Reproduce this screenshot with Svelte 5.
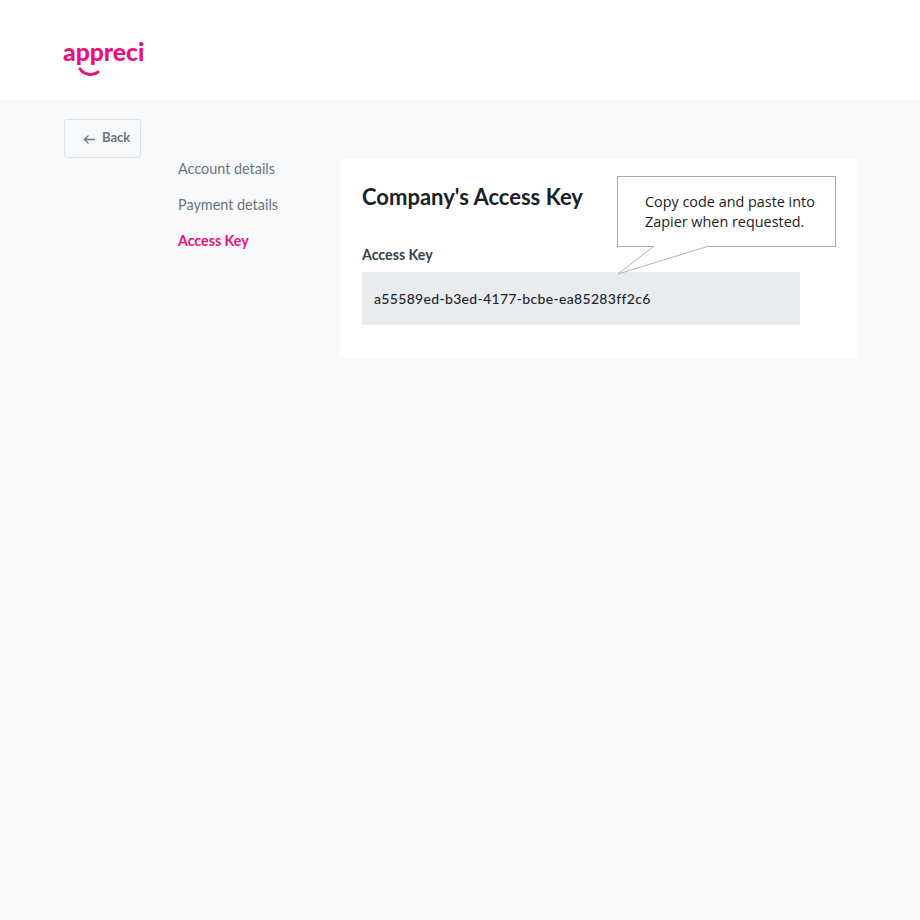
<script>
  const links = [
    { label: 'Account details' },
    { label: 'Payment details' },
    { label: 'Access Key', active: true }
  ];
  const accessKey = 'a55589ed-b3ed-4177-bcbe-ea85283ff2c6';
</script>

<div class="page">
  <header>
    <div class="logo">
      <span>appreci</span>
      <svg class="smile" width="22" height="10" viewBox="0 0 22 10">
        <path d="M2 2 C6 8 15 9 20 5" fill="none" stroke="#e9107f" stroke-width="3" stroke-linecap="round" />
      </svg>
    </div>
  </header>

  <main>
    <button class="back">
      <svg width="13" height="11" viewBox="0 0 13 11">
        <path d="M12 5.5H1.5M5.5 1.5 1.5 5.5l4 4" fill="none" stroke="#66757f" stroke-width="1.3" />
      </svg>
      <span>Back</span>
    </button>

    <div class="columns">
      <nav>
        {#each links as link}
          <div class="link" class:active={link.active}>{link.label}</div>
        {/each}
      </nav>

      <section class="card">
        <h1>Company's Access Key</h1>
        <div class="label">Access Key</div>
        <div class="key">{accessKey}</div>

        <div class="callout">
          <p>Copy code and paste into<br />Zapier when requested.</p>
          <svg class="tail" width="94" height="30" viewBox="0 0 94 30">
            <path d="M37 0 1 28 92 0" fill="#fff" stroke="#b4b4b4" stroke-width="1" />
          </svg>
        </div>
      </section>
    </div>
  </main>
</div>

<style>
  :global(body) {
    background: #f8f9fb;
  }
  .page {
    min-height: 920px;
    background: #f8f9fb;
    font-family: Lato, "Noto Sans", sans-serif;
  }
  header {
    height: 100px;
    box-sizing: border-box;
    background: #fff;
    padding: 36px 0 0 63px;
  }
  .logo {
    display: inline-flex;
    flex-direction: column;
    font-size: 24.7px;
    font-weight: 900;
    line-height: 32px;
    color: #e9107f;
  }
  .smile {
    margin: -1px 0 0 15px;
  }
  main {
    padding: 19px 0 0 64px;
  }
  .back {
    display: flex;
    align-items: center;
    gap: 6px;
    width: 77px;
    height: 39px;
    box-sizing: border-box;
    padding: 0 0 4px 18px;
    background: #f8f9fb;
    border: 1px solid #dfe2e5;
    border-radius: 3px;
    font: 700 13px Lato, "Noto Sans", sans-serif;
    color: #66757f;
  }
  .back svg {
    margin-top: 6px;
  }
  .columns {
    display: flex;
    margin-top: 1px;
  }
  nav {
    width: 162px;
    margin-left: 114px;
  }
  .link {
    height: 36px;
    font-size: 14.4px;
    line-height: 20px;
    color: #66757f;
  }
  .link.active {
    color: #e9107f;
    font-size: 14.2px;
    font-weight: 700;
  }
  .card {
    position: relative;
    width: 517px;
    height: 199px;
    box-sizing: border-box;
    padding: 22px 57px 0 22px;
    background: #fff;
  }
  h1 {
    margin: 0;
    font-size: 22px;
    line-height: 32px;
    font-weight: 700;
    color: #1a2128;
  }
  .label {
    margin-top: 32px;
    font-size: 14.2px;
    line-height: 20px;
    font-weight: 700;
    color: #38424b;
  }
  .key {
    margin-top: 7px;
    height: 53px;
    box-sizing: border-box;
    padding: 0 12px;
    background: #e9ecef;
    border-radius: 2px;
    font-size: 14px;
    font-weight: 500;
    letter-spacing: 0.32px;
    line-height: 54px;
    color: #1f272e;
  }
  .callout {
    position: absolute;
    left: 277px;
    top: 17px;
    width: 219px;
    height: 71px;
    box-sizing: border-box;
    background: #fff;
    border: 1px solid #a9a9a9;
    padding: 15px 0 0 27px;
  }
  .callout p {
    margin: 0;
    font-family: "Open Sans", "Noto Sans", sans-serif;
    font-size: 14.4px;
    line-height: 20px;
    color: #222;
  }
  .tail {
    position: absolute;
    left: -1px;
    top: 69px;
    overflow: visible;
  }
</style>
